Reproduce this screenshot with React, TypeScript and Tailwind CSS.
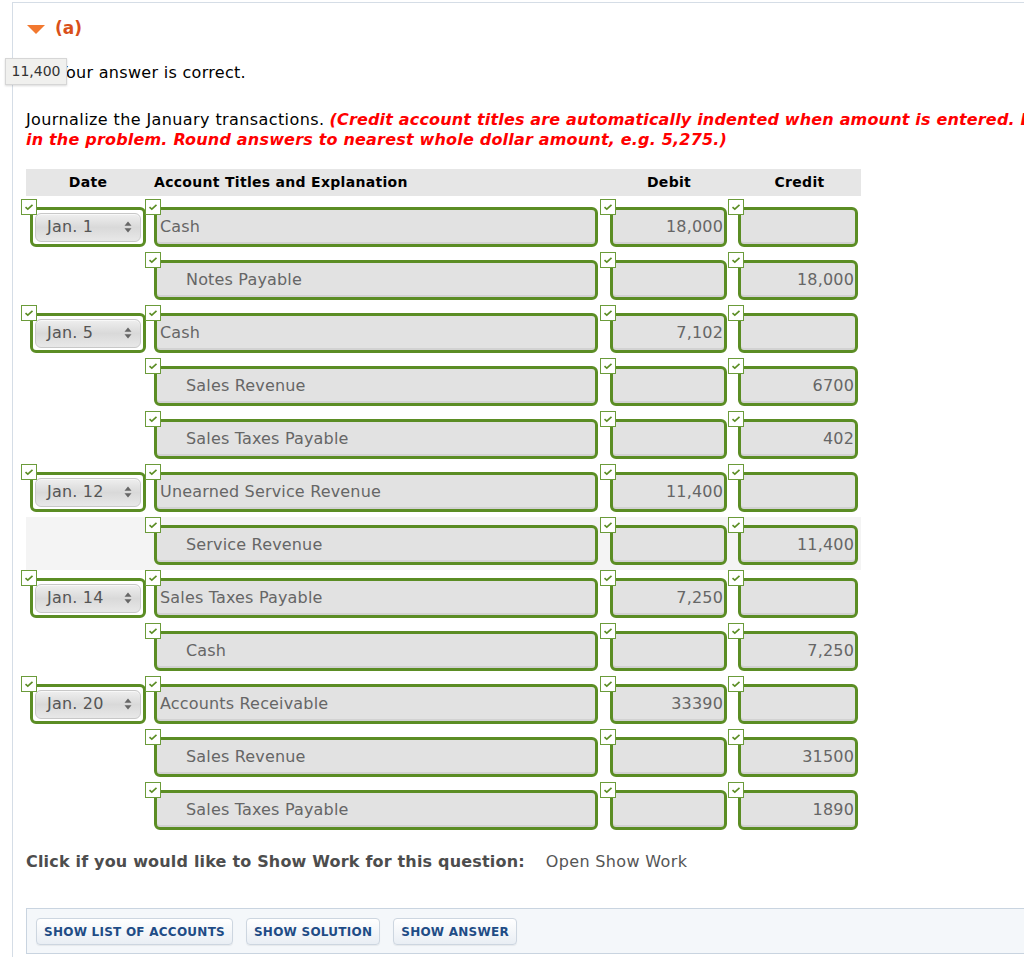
import React from "react";

type Row = {
  date?: string;
  account: string;
  indent?: boolean;
  debit?: string;
  credit?: string;
};

const rows: Row[] = [
  { date: "Jan. 1", account: "Cash", debit: "18,000" },
  { account: "Notes Payable", indent: true, credit: "18,000" },
  { date: "Jan. 5", account: "Cash", debit: "7,102" },
  { account: "Sales Revenue", indent: true, credit: "6700" },
  { account: "Sales Taxes Payable", indent: true, credit: "402" },
  { date: "Jan. 12", account: "Unearned Service Revenue", debit: "11,400" },
  { account: "Service Revenue", indent: true, credit: "11,400" },
  { date: "Jan. 14", account: "Sales Taxes Payable", debit: "7,250" },
  { account: "Cash", indent: true, credit: "7,250" },
  { date: "Jan. 20", account: "Accounts Receivable", debit: "33390" },
  { account: "Sales Revenue", indent: true, credit: "31500" },
  { account: "Sales Taxes Payable", indent: true, credit: "1890" },
];

function Check() {
  return (
    <div className="absolute left-0 top-0 z-10 flex h-[16px] w-[16px] items-center justify-center border border-[#6b9b3a] bg-white">
      <svg width="10" height="8" viewBox="0 0 10 8">
        <polyline points="1.5,4.2 3.8,6.2 8.5,1.8" fill="none" stroke="#5b8d24" strokeWidth="1.6" />
      </svg>
    </div>
  );
}

function Box({
  width,
  ml,
  children,
  align = "left",
  pl = 3,
}: {
  width: string;
  ml: string;
  children?: React.ReactNode;
  align?: "left" | "right";
  pl?: number;
}) {
  return (
    <div
      className={`${ml} mt-[8px] flex h-[40px] ${width} items-center rounded-[6px] border-[3px] border-[#5b8d24] bg-[#e2e2e2] shadow-[inset_0_-2px_0_#d2d2d2] text-[16px] tracking-[0.17px] text-[#666] ${
        align === "right" ? "justify-end pr-[1px]" : ""
      }`}
      style={align === "left" ? { paddingLeft: pl } : undefined}
    >
      {children}
    </div>
  );
}

function Arrows() {
  return (
    <svg width="8" height="12" viewBox="0 0 8 12">
      <polygon points="4,0.5 7.5,4.8 0.5,4.8" fill="#666" />
      <polygon points="4,11.5 7.5,7.2 0.5,7.2" fill="#666" />
    </svg>
  );
}

function JournalRow({ row, highlight }: { row: Row; highlight?: boolean }) {
  return (
    <div className={`flex h-[53px] w-[835px] ${highlight ? "bg-[#f4f4f4]" : ""}`}>
      <div className="relative -ml-[5px] w-[124px] shrink-0">
        {row.date && (
          <>
            <Check />
            <div className="ml-[9px] mt-[8px] flex h-[40px] w-[116px] items-center rounded-[6px] border-[3px] border-[#5b8d24] bg-white px-[2px]">
              <div className="flex h-[29px] w-full items-center justify-between rounded-[6px] border border-[#c8c8c8] bg-gradient-to-b from-[#efefef] via-[#d9d9d9] to-[#e8e8e8] pl-[11px] pr-[8px] text-[16px] tracking-[0.2px] text-[#555] shadow-[inset_0_1px_0_#f8f8f8]">
                <span>{row.date}</span>
                <Arrows />
              </div>
            </div>
          </>
        )}
      </div>
      <div className="relative w-[455px] shrink-0">
        <Check />
        <Box width="w-[444px]" ml="ml-[9px]" pl={row.indent ? 29 : 3}>
          {row.account}
        </Box>
      </div>
      <div className="relative w-[128px] shrink-0">
        <Check />
        <Box width="w-[117px]" ml="ml-[10px]" align="right">
          {row.debit}
        </Box>
      </div>
      <div className="relative w-[130px] shrink-0">
        <Check />
        <Box width="w-[120px]" ml="ml-[10px]" align="right">
          {row.credit}
        </Box>
      </div>
    </div>
  );
}

export default function App() {
  return (
    <div className="relative h-[957px] w-[1024px] overflow-hidden bg-white pl-[12px] pt-[2px] font-['DejaVu_Sans',Verdana,sans-serif] text-black">
      <div className="h-[1000px] w-[1200px] border-l border-t border-[#d5dde6]">
        {/* section header */}
        <div className="ml-[14px] mt-[16px] flex h-[20px] items-center gap-[10px]">
          <svg width="18" height="9" viewBox="0 0 18 9">
            <polygon points="0,0 18,0 9,9" fill="#f2782f" />
          </svg>
          <span className="text-[17px] font-bold text-[#d9501a]">(a)</span>
        </div>

        {/* answer line with tooltip */}
        <div className="relative mt-[22px] flex h-[24px] items-center pl-[45px] text-[16px] tracking-[0.3px] text-black">
          <span>Your answer is correct.</span>
          <div className="absolute left-[-8px] top-[-3px] flex h-[27px] w-[62px] items-center justify-center border border-[#d6d6d6] bg-[#f0f0ee] text-[14px] tracking-normal text-[#333] shadow-[0_1px_2px_rgba(0,0,0,0.15)]">
            11,400
          </div>
        </div>

        {/* instructions */}
        <div className="ml-[13px] mt-[25px] whitespace-nowrap text-[16px] leading-[20px]">
          <div>
            <span className="tracking-[0.4px]">Journalize the January transactions.</span>{" "}
            <span className="font-bold italic tracking-[0.17px] text-[#ff0000]">
              (Credit account titles are automatically indented when amount is entered. Do not indent manually. Record journal entries in the order presented
            </span>
          </div>
          <div className="font-bold italic tracking-[0.19px] text-[#ff0000]">
            in the problem. Round answers to nearest whole dollar amount, e.g. 5,275.)
          </div>
        </div>

        {/* table */}
        <div className="ml-[13px] mt-[19px] w-[835px]">
          <div className="flex h-[27px] w-[835px] items-center bg-[#e6e6e6] text-[14px] font-bold tracking-[0.3px]">
            <div className="w-[124px] text-center">Date</div>
            <div className="w-[450px] pl-[4px]">Account Titles and Explanation</div>
            <div className="w-[138px] text-center">Debit</div>
            <div className="w-[123px] text-center">Credit</div>
          </div>
          <div className="mt-[3px]">
            {rows.map((r, i) => (
              <JournalRow key={i} row={r} highlight={i === 6} />
            ))}
          </div>
        </div>

        {/* show work */}
        <div className="ml-[13px] mt-[15px] flex h-[24px] items-center text-[16px]">
          <span className="font-bold tracking-[0.18px] text-[#4d4d4d]">
            Click if you would like to Show Work for this question:
          </span>
          <span className="ml-[21px] tracking-[0.35px] text-[#555]">Open Show Work</span>
        </div>

        {/* bottom panel */}
        <div className="ml-[13px] mt-[34px] border-b border-l border-t border-[#c9d4e0] bg-[#f4f7fa] pb-[8px] pl-[9px] pt-[9px]">
          <div className="flex gap-[13px]">
            {["SHOW LIST OF ACCOUNTS", "SHOW SOLUTION", "SHOW ANSWER"].map((t) => (
              <button
                key={t}
                className="flex h-[27px] items-center rounded-[4px] border border-[#cdd6e0] bg-gradient-to-b from-white to-[#e9eef4] px-[7px] text-[12px] font-bold tracking-[0.25px] text-[#1f4c86] shadow-[0_1px_1px_rgba(0,0,0,0.06)]"
              >
                {t}
              </button>
            ))}
          </div>
        </div>
      </div>
    </div>
  );
}
